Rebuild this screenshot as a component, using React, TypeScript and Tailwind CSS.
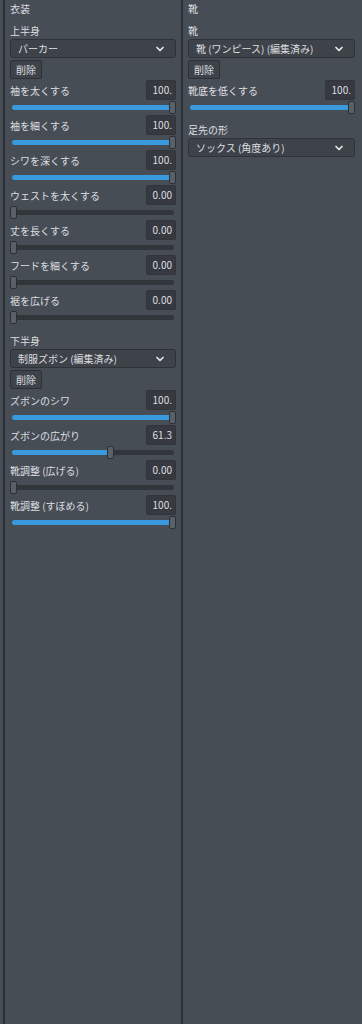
import { ChevronDown } from 'lucide-react'

type Row = { label: string; value: number; text: string }

const upper: Row[] = [
  { label: '袖を太くする', value: 100, text: '100.' },
  { label: '袖を細くする', value: 100, text: '100.' },
  { label: 'シワを深くする', value: 100, text: '100.' },
  { label: 'ウェストを太くする', value: 0, text: '0.00' },
  { label: '丈を長くする', value: 0, text: '0.00' },
  { label: 'フードを細くする', value: 0, text: '0.00' },
  { label: '裾を広げる', value: 0, text: '0.00' },
]

const lower: Row[] = [
  { label: 'ズボンのシワ', value: 100, text: '100.' },
  { label: 'ズボンの広がり', value: 61.3, text: '61.3' },
  { label: '靴調整 (広げる)', value: 0, text: '0.00' },
  { label: '靴調整 (すぼめる)', value: 100, text: '100.' },
]

const shoes: Row[] = [{ label: '靴底を低くする', value: 100, text: '100.' }]

function Select({ text }: { text: string }) {
  return (
    <div className="h-[19px] rounded-[3px] border border-[#2f3338] bg-[#3e434a] flex items-center justify-between pl-[7px] pr-[9px]">
      <span className="whitespace-nowrap leading-[14px]">{text}</span>
      <ChevronDown size={12} strokeWidth={3.5} className="text-[#e8e8e8] shrink-0" />
    </div>
  )
}

function DeleteButton() {
  return (
    <div className="mt-[2px] h-[19px] w-[32px] rounded-[2px] border border-[#2d3136] bg-[#3e434a] flex items-center justify-center">
      削除
    </div>
  )
}

function Slider({ row }: { row: Row }) {
  const pct = row.value / 100
  return (
    <div className="h-[35px] flex flex-col">
      <div className="h-[20px] flex items-center justify-between">
        <span className="pt-[1px]">{row.label}</span>
        <div className="h-[20px] w-[30px] rounded-[2px] border border-[#31353a] bg-[#363a40] flex items-center justify-end pr-[3px] whitespace-nowrap">
          {row.text}
        </div>
      </div>
      <div className="relative h-[14px] mt-[1px]">
        <div className="absolute left-[2px] right-[2px] top-[4px] h-[5px] rounded-[2px] bg-[#31363b]" />
        <div
          className="absolute left-[2px] top-[4px] h-[5px] rounded-l-[2px] bg-[#3a98dc]"
          style={{ width: `calc((100% - 7px) * ${pct})` }}
        />
        <div
          className="absolute top-0 h-[13px] w-[7px] rounded-[2px] border border-[#2c3034] bg-[#5a6068]"
          style={{ left: `calc((100% - 7px) * ${pct})` }}
        />
      </div>
    </div>
  )
}

export default function App() {
  return (
    <div
      className="flex w-[362px] h-[1024px] bg-[#464d55] text-[10px] text-[#dedfe0] leading-none"
      style={{ fontFamily: '"Noto Sans CJK JP", "Noto Sans", sans-serif' }}
    >
      <div className="w-[3px] shrink-0" />
      <div className="w-[2px] shrink-0 bg-[#2c3035]" />
      <div className="w-[176px] shrink-0 pl-[5px] pr-[5px] flex flex-col">
        <div className="h-[18px] flex items-center">衣装</div>
        <div className="mt-[4px] h-[17px] flex items-center">上半身</div>
        <Select text="パーカー" />
        <DeleteButton />
        <div className="mt-[1px]">
          {upper.map((r) => (
            <Slider key={r.label} row={r} />
          ))}
        </div>
        <div className="mt-[7px] h-[17px] flex items-center">下半身</div>
        <Select text="制服ズボン (編集済み)" />
        <DeleteButton />
        <div className="mt-[1px]">
          {lower.map((r) => (
            <Slider key={r.label} row={r} />
          ))}
        </div>
      </div>
      <div className="w-[2px] shrink-0 bg-[#2c3035]" />
      <div className="flex-1 pl-[5px] pr-[7px] flex flex-col">
        <div className="h-[18px] flex items-center">靴</div>
        <div className="mt-[4px] h-[17px] flex items-center">靴</div>
        <Select text="靴 (ワンピース) (編集済み)" />
        <DeleteButton />
        <div className="mt-[1px]">
          {shoes.map((r) => (
            <Slider key={r.label} row={r} />
          ))}
        </div>
        <div className="mt-[6px] h-[17px] flex items-center">足先の形</div>
        <Select text="ソックス (角度あり)" />
      </div>
    </div>
  )
}
